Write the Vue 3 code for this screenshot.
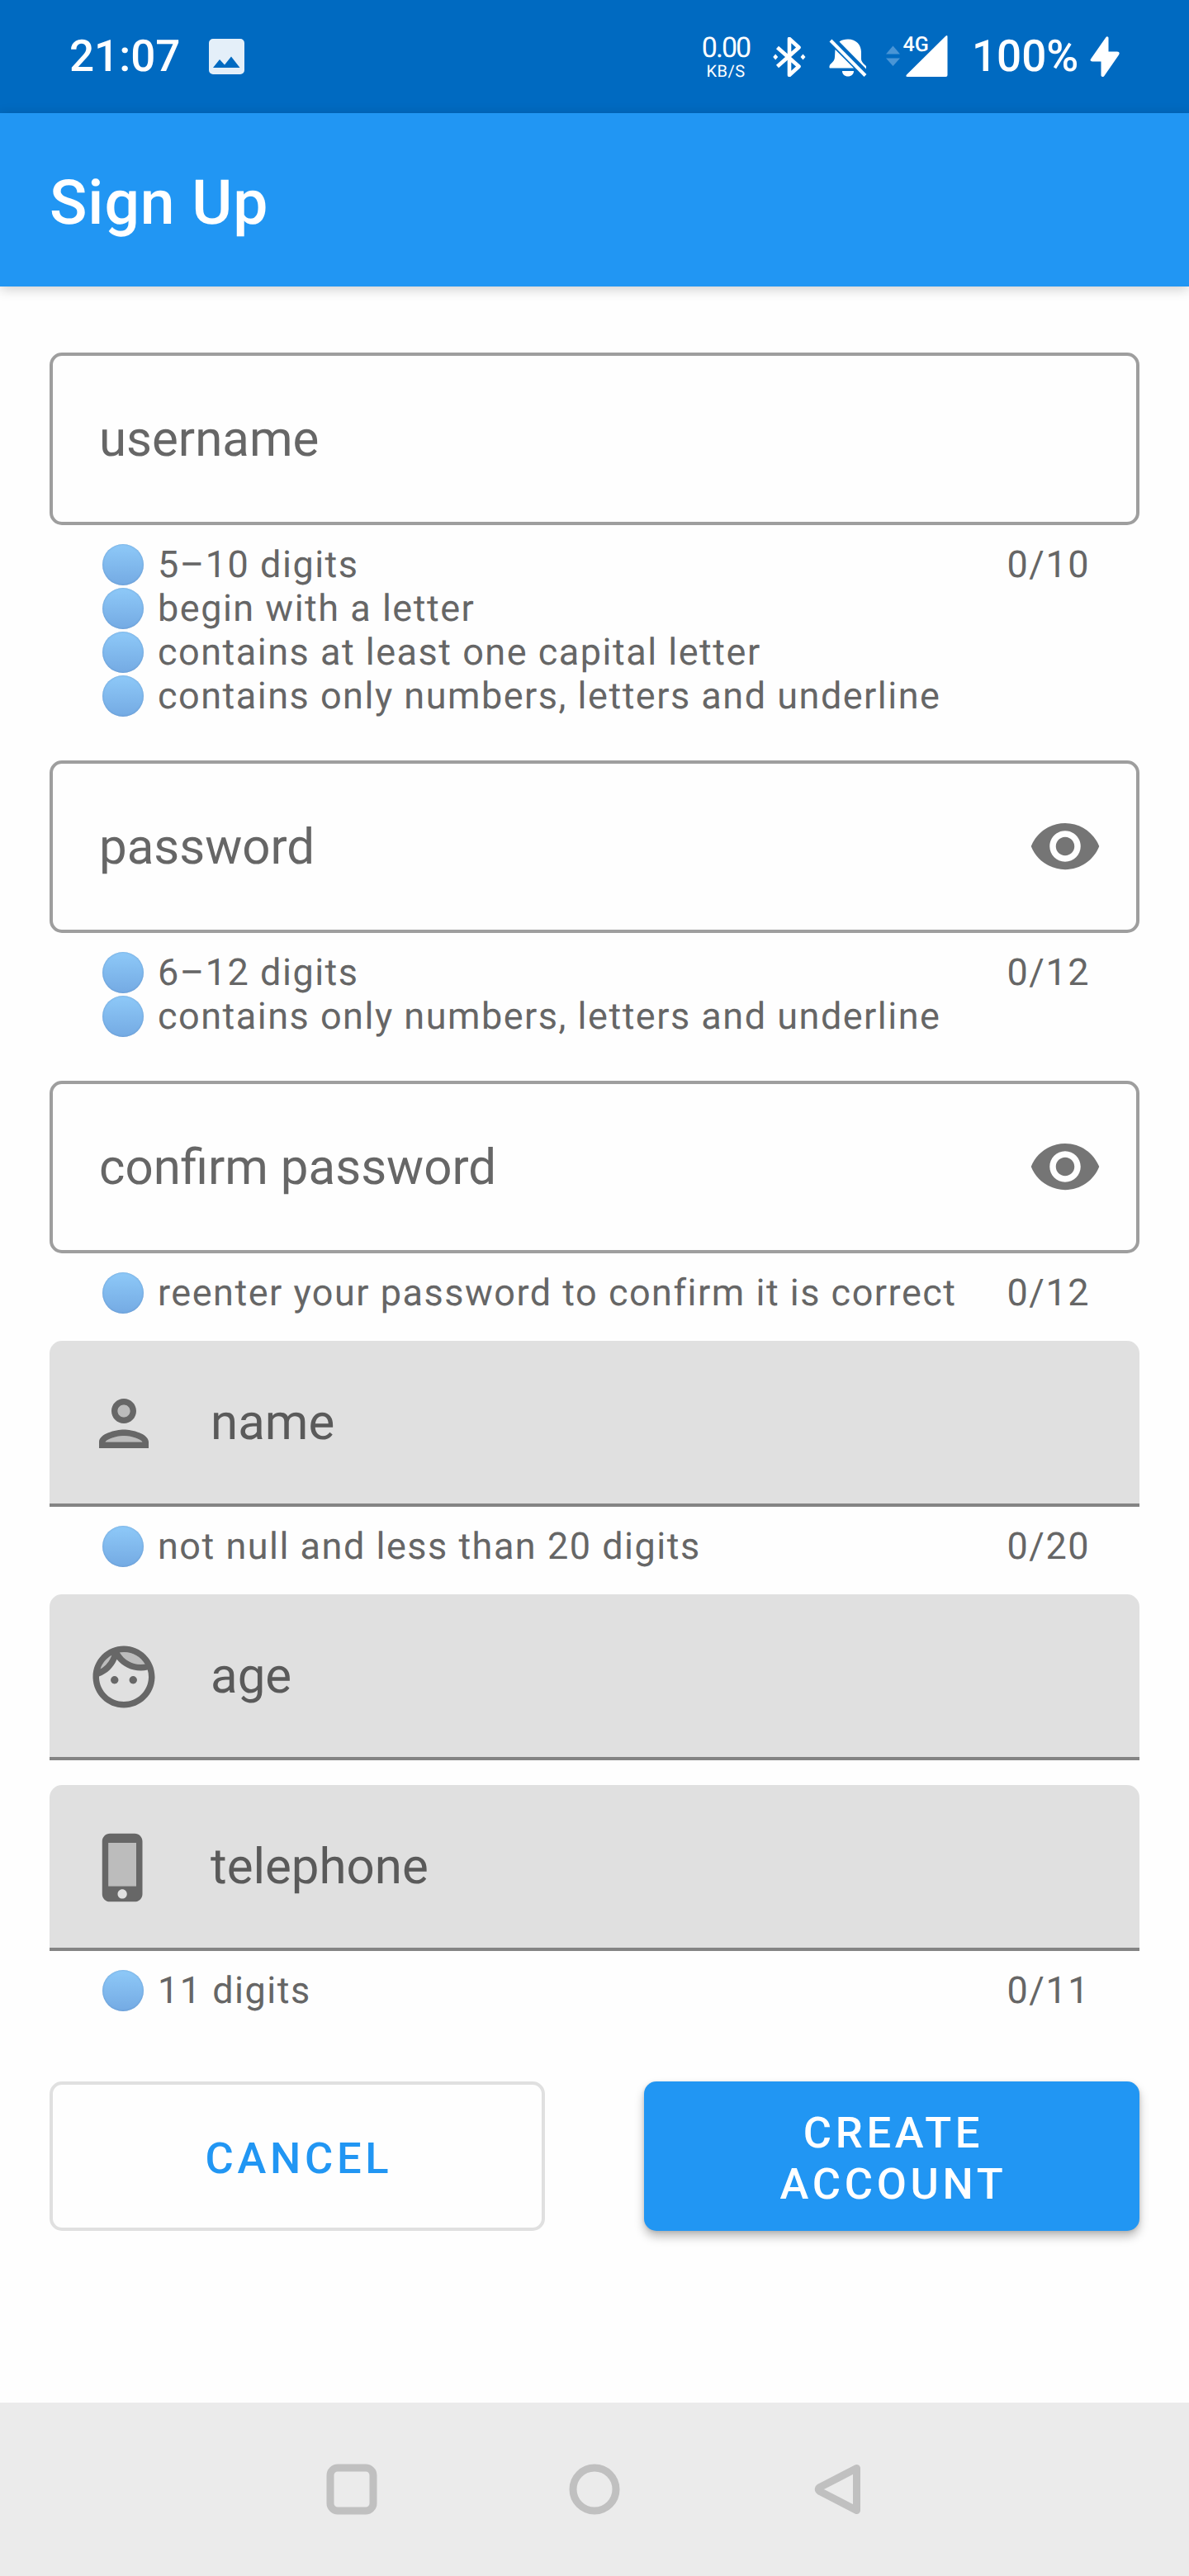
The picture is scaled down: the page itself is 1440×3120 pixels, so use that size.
<script setup>
const outlined = [
  {
    label: 'username',
    eye: false,
    hints: [
      '5–10 digits',
      'begin with a letter',
      'contains at least one capital letter',
      'contains only numbers, letters and underline',
    ],
    counter: '0/10',
  },
  {
    label: 'password',
    eye: true,
    hints: ['6–12 digits', 'contains only numbers, letters and underline'],
    counter: '0/12',
  },
  {
    label: 'confirm password',
    eye: true,
    hints: ['reenter your password to confirm it is correct'],
    counter: '0/12',
  },
]

const filled = [
  { label: 'name', icon: 'person', hints: ['not null and less than 20 digits'], counter: '0/20' },
  { label: 'age', icon: 'face', hints: [], counter: '' },
  { label: 'telephone', icon: 'phone', hints: ['11 digits'], counter: '0/11' },
]
</script>

<template>
  <div class="screen">
    <header class="status">
      <span class="clock">21:07</span>
      <svg class="picture" viewBox="0 0 43 43">
        <path
          fill="#e4eff9"
          fill-rule="evenodd"
          d="M5 0H38a5 5 0 0 1 5 5V38a5 5 0 0 1-5 5H5a5 5 0 0 1-5-5V5a5 5 0 0 1 5-5ZM5 35H37.500L27 21.500L19 31.500L13 25Z"
        />
      </svg>
      <span class="spacer"></span>
      <span class="speed">
        <span class="rate">0.00</span>
        <span class="unit">KB/S</span>
      </span>
      <svg class="bluetooth" viewBox="0 0 40 48">
        <path
          d="M5.500 12.500L31.500 35.500L20 46V2L31.500 12.500L5.500 35.500"
          fill="none"
          stroke="#fff"
          stroke-width="4.600"
          stroke-linejoin="round"
        />
        <path d="M3.200 20.600L6.200 24L3.200 27.400L.200 24ZM36.500 20.600L39.500 24L36.500 27.400L33.500 24Z" fill="#fff" />
      </svg>
      <svg class="bell" viewBox="0 0 46 46">
        <path
          fill="#fff"
          d="M12.500 3.500C15.500 1.300 19 .500 23 .500C33 .500 39 7.500 39 16V24C39 28 42 30 45 33V36.500ZM7.500 13L30 35.500H1C0 35.500 .500 32 1.500 31C5 28 7 25.500 7 22ZM16 39H30C30 43 27 45.500 23 45.500C19 45.500 16 43 16 39Z"
        />
        <path d="M2 2L44 44.500" fill="none" stroke="#fff" stroke-width="4" />
      </svg>
      <svg class="signal" viewBox="0 0 75 52">
        <path d="M0 23.500L8.500 13.500L17 23.500ZM0 28.500H17L8.500 38Z" fill="#4995d6" />
        <path d="M26 51C24 51 24 50 25 48.500L72 2C73.500 .500 74.500 .500 74.500 2.500V49A2 2 0 0 1 72.500 51Z" fill="#fff" />
        <text x="20.500" y="20.300" class="gen">4G</text>
      </svg>
      <span class="level">100%</span>
      <svg class="bolt" viewBox="0 0 36 50">
        <path
          d="M19.500 1L1 27.500Q-.500 30.500 3 30.500H13.500V47.500Q14.500 50 17 48.500L35 22.500Q37 18.500 33 18.500H22.500V1.500Q21 -.500 19.500 1Z"
          fill="#fff"
        />
      </svg>
    </header>

    <div class="appbar"><h1>Sign Up</h1></div>

    <main class="form">
      <section v-for="f in outlined" :key="f.label" class="field" :class="{ tight: f.label === 'confirm password' }">
        <div class="box outline">
          <span class="label">{{ f.label }}</span>
          <svg v-if="f.eye" class="icon" viewBox="0 0 24 24">
            <path
              fill="#757575"
              d="M12 4.500C7 4.500 2.730 7.610 1 12c1.730 4.390 6 7.500 11 7.500s9.270-3.110 11-7.500c-1.730-4.390-6-7.500-11-7.500zM12 17c-2.760 0-5-2.240-5-5s2.240-5 5-5 5 2.240 5 5-2.240 5-5 5zm0-8c-1.660 0-3 1.340-3 3s1.340 3 3 3 3-1.340 3-3-1.340-3-3-3z"
            />
          </svg>
        </div>
        <div class="helper">
          <ul>
            <li v-for="h in f.hints" :key="h"><i class="dot"></i>{{ h }}</li>
          </ul>
          <span>{{ f.counter }}</span>
        </div>
      </section>

      <section v-for="f in filled" :key="f.label" class="field tight">
        <div class="box solid">
          <svg v-if="f.icon === 'person'" class="icon" viewBox="0 0 24 24">
            <g fill="#bcbcbc">
              <path d="M12 16c-2.690 0-5.770 1.280-6 2h12c-.2-.71-3.300-2-6-2z" />
              <circle cx="12" cy="8" r="2" />
            </g>
            <path
              fill="#676767"
              d="M12 14c-2.670 0-8 1.340-8 4v2h16v-2c0-2.660-5.330-4-8-4zm-6 4c.22-.72 3.310-2 6-2 2.700 0 5.800 1.290 6 2H6zm6-6c2.210 0 4-1.790 4-4s-1.790-4-4-4-4 1.790-4 4 1.790 4 4 4zm0-6c1.100 0 2 .9 2 2s-.9 2-2 2-2-.9-2-2 .9-2 2-2z"
            />
          </svg>
          <svg v-else-if="f.icon === 'face'" class="icon" viewBox="0 0 24 24">
            <path
              fill="#bcbcbc"
              d="M17.500 8c.46 0 .91-.05 1.340-.12C17.440 5.560 14.900 4 12 4c-.46 0-.91.05-1.340.12C12.060 6.440 14.600 8 17.500 8zM8.080 5.030C6.370 6 5.050 7.580 4.420 9.470c1.710-.97 3.030-2.550 3.660-4.440z"
            />
            <path
              fill="#676767"
              d="M10.250 13c0 .69-.56 1.250-1.250 1.250S7.750 13.690 7.750 13s.56-1.250 1.250-1.250 1.250.56 1.250 1.250zM15 11.750c-.69 0-1.250.56-1.250 1.250s.56 1.250 1.250 1.250 1.250-.56 1.250-1.250-.56-1.250-1.250-1.250zM22 12c0 5.520-4.480 10-10 10S2 17.520 2 12 6.480 2 12 2s10 4.480 10 10zM10.660 4.120C12.060 6.440 14.600 8 17.500 8c.46 0 .91-.05 1.340-.12C17.440 5.560 14.900 4 12 4c-.46 0-.91.05-1.340.12zM4.420 9.470c1.710-.97 3.030-2.550 3.660-4.440C6.370 6 5.050 7.580 4.420 9.470zM20 12c0-.78-.12-1.530-.33-2.240-.7.150-1.420.24-2.170.24-3.130 0-5.920-1.440-7.760-3.690C8.690 8.870 6.600 10.880 4 11.860c.01.04 0 .09 0 .14 0 4.410 3.590 8 8 8s8-3.590 8-8z"
            />
          </svg>
          <svg v-else class="icon" viewBox="0 0 24 24">
            <path fill="#bcbcbc" d="M7 4h9v14H7z" />
            <path
              fill="#676767"
              d="M15.500 1h-8C6.120 1 5 2.120 5 3.500v17C5 21.880 6.120 23 7.500 23h8c1.380 0 2.500-1.120 2.500-2.500v-17C18 2.120 16.880 1 15.500 1zm-4 21c-.83 0-1.500-.67-1.500-1.500s.67-1.500 1.500-1.500 1.500.67 1.500 1.500-.67 1.500-1.500 1.500zm4.500-4H7V4h9v14z"
            />
          </svg>
          <span class="label">{{ f.label }}</span>
        </div>
        <div v-if="f.hints.length" class="helper">
          <ul>
            <li v-for="h in f.hints" :key="h"><i class="dot"></i>{{ h }}</li>
          </ul>
          <span>{{ f.counter }}</span>
        </div>
      </section>

      <div class="actions">
        <button class="btn cancel" type="button">CANCEL</button>
        <button class="btn create" type="button">CREATE<br />ACCOUNT</button>
      </div>
    </main>

    <nav class="navbar">
      <svg viewBox="0 0 62 62">
        <rect x="5" y="5" width="52" height="52" rx="9" />
      </svg>
      <svg viewBox="0 0 62 62">
        <circle cx="31" cy="31" r="26" />
      </svg>
      <svg viewBox="0 0 62 62">
        <path d="M54.500 5.500V56.500L10 33.500Q6.500 31 10 28.500Z" stroke-linejoin="round" />
      </svg>
    </nav>
  </div>
</template>

<style>
body {
  background: #fff;
}
</style>

<style scoped>
.screen {
  display: flex;
  flex-direction: column;
  width: 1440px;
  height: 3120px;
  overflow: hidden;
  background: #fefefe;
  font-family: Roboto, 'Liberation Sans', sans-serif;
  text-rendering: geometricPrecision;
}

.status {
  display: flex;
  align-items: flex-start;
  box-sizing: border-box;
  height: 137px;
  padding: 42px 84px 0 84px;
  background: #006ac1;
  color: #fff;
}
.status svg {
  display: block;
  flex: none;
}
.clock,
.level {
  margin-top: -5px;
  font-size: 53px;
  font-weight: 500;
  line-height: 62px;
  white-space: nowrap;
}
.clock {
  width: 169px;
}
.picture {
  width: 43px;
  height: 43px;
  margin-top: 5px;
}
.spacer {
  flex: 1;
}
.speed {
  display: flex;
  flex-direction: column;
  align-items: center;
  width: 62px;
  margin-right: 26px;
}
.rate {
  height: 34px;
  margin-top: -4px;
  font-size: 34px;
  line-height: 40px;
  letter-spacing: -2px;
}
.unit {
  margin-top: 2px;
  font-size: 20px;
  line-height: 24px;
  letter-spacing: 0.5px;
}
.bluetooth {
  width: 40px;
  height: 48px;
  margin: 3px 28px 0 0;
}
.bell {
  width: 46px;
  height: 46px;
  margin: 5px 23px 0 0;
}
.signal {
  width: 75px;
  height: 52px;
  margin-right: 29px;
  overflow: visible;
}
.gen {
  fill: #fff;
  font-size: 25px;
  font-weight: 500;
}
.level {
  width: 143px;
}
.bolt {
  width: 36px;
  height: 50px;
  margin-top: 2px;
}

.appbar {
  display: flex;
  align-items: center;
  height: 210px;
  padding-left: 60px;
  background: #2196f3;
  box-shadow: 0 3px 14px rgba(0, 0, 0, 0.2);
}
.appbar h1 {
  margin: 8px 0 0;
  color: #fff;
  font-size: 75px;
  font-weight: 500;
  line-height: 88px;
  letter-spacing: 0.94px;
}

.form {
  flex: 1;
  padding: 80px 60px 0;
}
.field {
  margin-bottom: 51px;
}
.field.tight {
  margin-bottom: 31px;
}
.field.tight:nth-of-type(5) {
  margin-bottom: 30px;
}
.box {
  display: flex;
  align-items: center;
  box-sizing: border-box;
}
.outline {
  justify-content: space-between;
  height: 209px;
  padding: 0 41px 0 56px;
  border: 4px solid #9e9e9e;
  border-radius: 15px;
}
.outline .icon {
  margin-top: -1px;
}
/* The underline is part of the background so that it runs the full field width. */
.solid {
  height: 201px;
  padding: 0 45px 1px;
  gap: 60px;
  border-radius: 15px 15px 0 0;
  background: linear-gradient(to bottom, #e0e0e0 197px, #848484 197px);
}
.icon {
  display: block;
  flex: none;
  width: 90px;
  height: 90px;
}
.label {
  color: #666;
  font-size: 60px;
  line-height: 70px;
}
.solid .label {
  margin-top: -2px;
  color: #5a5a5a;
}
.helper {
  display: flex;
  justify-content: space-between;
  padding: 21px 60px 1px 64px;
  color: #666;
  font-size: 45px;
  line-height: 53px;
  letter-spacing: 1.5px;
  white-space: nowrap;
}
.helper ul {
  margin: 0;
  padding: 0;
  list-style: none;
}
.helper li {
  display: flex;
  align-items: flex-start;
  height: 53px;
}
.dot {
  width: 50px;
  height: 50px;
  margin: 2px 17px 0 0;
  border-radius: 50%;
  background: linear-gradient(#8ec9f8, #74aae3);
  box-shadow: inset 0 0 2px rgba(60, 110, 170, 0.5);
}

.actions {
  display: flex;
  gap: 120px;
  padding-top: 52px;
}
.btn {
  box-sizing: border-box;
  width: 600px;
  height: 181px;
  padding: 4px 0 0 4px;
  border: 0;
  border-radius: 15px;
  font-family: inherit;
  font-size: 52.5px;
  font-weight: 500;
  line-height: 62px;
  letter-spacing: 4.69px;
}
.cancel {
  border: 4px solid #e0e0e0;
  background: transparent;
  color: #2196f3;
}
.create {
  background: #2196f3;
  color: #fff;
  box-shadow: 0 7px 12px rgba(0, 0, 0, 0.26), 0 1px 4px rgba(0, 0, 0, 0.12);
}

.navbar {
  display: flex;
  align-items: center;
  justify-content: center;
  gap: 232px;
  height: 210px;
  background: #ebebeb;
}
.navbar svg {
  width: 62px;
  height: 62px;
}
.navbar svg * {
  fill: none;
  stroke: #c0c0c0;
  stroke-width: 9;
}
</style>
